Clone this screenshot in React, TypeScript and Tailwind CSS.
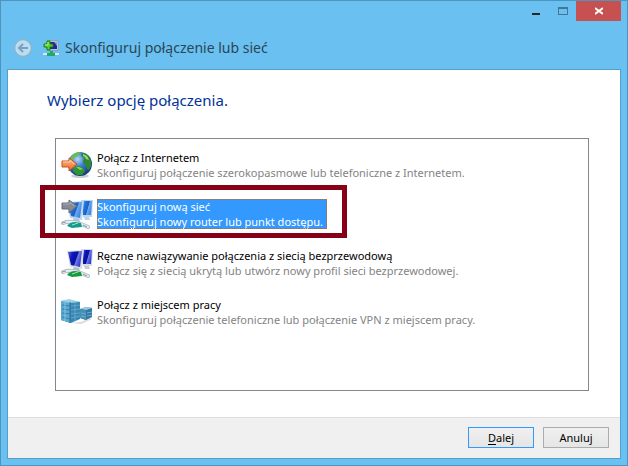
import { useState } from "react";
import clsx from "clsx";

const options = [
  {
    id: "internet",
    title: "Połącz z Internetem",
    description: "Skonfiguruj połączenie szerokopasmowe lub telefoniczne z Internetem.",
    Icon: GlobeIcon,
  },
  {
    id: "new-network",
    title: "Skonfiguruj nową sieć",
    description: "Skonfiguruj nowy router lub punkt dostępu.",
    Icon: NewNetworkIcon,
  },
  {
    id: "wireless",
    title: "Ręczne nawiązywanie połączenia z siecią bezprzewodową",
    description: "Połącz się z siecią ukrytą lub utwórz nowy profil sieci bezprzewodowej.",
    Icon: WirelessIcon,
  },
  {
    id: "workplace",
    title: "Połącz z miejscem pracy",
    description: "Skonfiguruj połączenie telefoniczne lub połączenie VPN z miejscem pracy.",
    Icon: ServersIcon,
  },
];

function GlobeIcon() {
  return (
    <svg className="size-8 shrink-0" viewBox="0 0 32 32" aria-hidden="true">
      <defs>
        <radialGradient id="sea" cx="0.4" cy="0.3" r="0.75">
          <stop offset="0" stopColor="#b5d9fa" />
          <stop offset="0.4" stopColor="#3f7fd6" />
          <stop offset="1" stopColor="#12306f" />
        </radialGradient>
        <linearGradient id="arrow" x1="0" y1="0" x2="0" y2="1">
          <stop offset="0" stopColor="#ffb583" />
          <stop offset="1" stopColor="#ee6a22" />
        </linearGradient>
      </defs>
      <ellipse cx="19" cy="27" rx="9" ry="2" fill="#c9ced6" />
      <circle cx="19" cy="15" r="12" fill="url(#sea)" />
      <path d="M21 4c5 0 8 4 9 8l0 5-2 4-2-1-1-4-3-2 0-3 2-2-3-1-1-2z" fill="#2f8a2f" />
      <path d="M22 5l4 2 2 4-3-1-1-2-2-1z" fill="#a5d86a" />
      <path d="M10 8l4-4 4-1 1 1-2 3-3 1-2 3-3 1z" fill="#6dbd4b" />
      <path d="M13 18l5-1 5 3 1 2-3 4-5 0-4-4z" fill="#2f962b" />
      <path d="M15 18l3 0 4 2-3 1z" fill="#86cf5b" />
      <path d="M1 12h7V9l8 6-8 7v-4H1z" fill="url(#arrow)" stroke="#c45420" strokeLinejoin="round" />
      <path d="M2 13h7v-2l4 4" fill="none" stroke="#ffd0aa" />
    </svg>
  );
}

function Monitors({ muted = false }: { muted?: boolean }) {
  const id = muted ? "screen-muted" : "screen";
  const frame = muted ? "#bdd6ee" : "#d9dde3";
  return (
    <>
      <defs>
        <linearGradient id={id} x1="0" y1="0" x2="1" y2="0.4">
          <stop offset="0" stopColor={muted ? "#65a5ef" : "#5b6be6"} />
          <stop offset="0.35" stopColor={muted ? "#2474d8" : "#0c17bb"} />
          <stop offset="0.65" stopColor={muted ? "#1a5fc4" : "#0a0f9c"} />
          <stop offset="0.72" stopColor={muted ? "#6aa9f0" : "#6f7be8"} />
          <stop offset="1" stopColor={muted ? "#3d88e2" : "#3340cb"} />
        </linearGradient>
      </defs>
      <path d="M20 2l12 0-1 17-9 0z" fill={frame} />
      <path d="M21 3l10 0-1 14-8 0z" fill={`url(#${id})`} />
      <path d="M6 4l17-1-2 19-12-2z" fill={frame} />
      <path d="M7 5l14-1-2 16-9-2z" fill={`url(#${id})`} />
      <path d="M13 20l5 1 1 3-8 0z" fill={muted ? "#a5c6e5" : "#b9bdc4"} />
      <path d="M23 19l5 0 1 3-5 0z" fill={muted ? "#b9d3ea" : "#c8ccd2"} />
    </>
  );
}

function Cable({ color }: { color: string }) {
  return (
    <>
      <path d="M2 25q10-4 25 4" fill="none" stroke="#aebdc6" strokeWidth="4" strokeLinecap="round" />
      <path d="M2 25q10-4 25 4" fill="none" stroke="#e6f0f4" strokeWidth="2" strokeLinecap="round" />
      <path d="M6 28q3-4 8-4l6 1 1 4-10 1z" fill={color} />
      <path d="M11 27l6-2" stroke="#a5dfb5" />
      <path d="M1 25l4-1M22 27l4 2" stroke="#8299a4" />
    </>
  );
}

function NewNetworkIcon() {
  return (
    <svg className="size-8 shrink-0 overflow-visible" viewBox="0 0 32 32" aria-hidden="true">
      <Monitors muted />
      <Cable color="#159a91" />
      <path d="M1 5h7V2l8 6-8 7v-4H1z" fill="#878995" stroke="#656b7c" strokeLinejoin="round" />
      <path d="M2 6h7V4l4 4" fill="none" stroke="#aaacb5" />
    </svg>
  );
}

function WirelessIcon() {
  return (
    <svg className="size-8 shrink-0 overflow-visible" viewBox="0 0 32 32" aria-hidden="true">
      <Monitors />
      <Cable color="#169b3d" />
    </svg>
  );
}

function ServersIcon() {
  return (
    <svg className="size-8 shrink-0" viewBox="0 0 32 32" aria-hidden="true">
      <path d="M10 27l10-1 9-4 2 1-11 5z" fill="#d5dade" />
      <path d="M0 5l9-1 10 2v17l-9 4-10-3z" fill="#3b87b2" />
      <path d="M0 5l9 1v21l-9-3z" fill="#5aa9d2" />
      <path d="M0 5l8-2 11 3-10 1z" fill="#9bd0e8" />
      <path d="M1 9l8 1M1 13l8 1M1 17l8 1M1 21l8 2" stroke="#367fa8" />
      <path d="M4 6v19" stroke="#83c4e3" />
      <path d="M10 10l9-1M10 14l9-1M10 18l9-1M10 22l9-2M14 7v18" stroke="#5ea8cc" />
      <path d="M9 6v21" stroke="#2c7199" />
      <path d="M19 13l6-2 6 1v9l-6 3-6-2z" fill="#34789f" />
      <path d="M19 13l6-2 6 1-6 2z" fill="#9ccde4" />
      <path d="M19 13l6 1v10l-6-2z" fill="#4590b8" />
      <path d="M20 17l5 1M20 20l5 1M26 17l5-1M26 20l5-1" stroke="#6aaccb" />
    </svg>
  );
}

function BackIcon() {
  return (
    <svg className="size-5" viewBox="0 0 20 20" fill="none" aria-hidden="true">
      <circle cx="10" cy="10" r="8.500" fill="#b6def6" stroke="#8eb4c9" strokeWidth="1.500" />
      <path d="M15 10H6M10 6l-4 4 4 4" stroke="#7f9fb2" strokeWidth="2" />
    </svg>
  );
}

function WizardIcon() {
  return (
    <svg className="size-4" viewBox="0 0 16 16" aria-hidden="true">
      <path d="M5 1h10v9H5z" fill="#f0f4f8" stroke="#8796a5" />
      <path d="M7 2h7v7H7z" fill="#23269c" />
      <path d="M11 2h3v4z" fill="#8b95df" />
      <path d="M0 13h16v2H0z" fill="#dfe5e9" />
      <path d="M7 11h3v2h2v3H4v-3h3z" fill="#1fac62" />
      <path d="M4 1h3v3h3v3H7v3H4V7H1V4h3z" fill="#59d22e" stroke="#1c7a16" />
      <path d="M5 2v3H2" fill="none" stroke="#b6f28e" />
    </svg>
  );
}

export default function App() {
  const [selected, setSelected] = useState("new-network");

  return (
    <div className="flex min-h-screen flex-col border border-[#4e95bd] bg-[#69c0f1] px-1.5 pb-1.5 font-['Noto_Sans','Open_Sans',sans-serif] text-[11px] text-black">
      <header className="flex h-17 flex-col">
        <div className="flex h-5 justify-end">
          <button type="button" aria-label="Minimalizuj" className="flex w-7 items-center justify-center">
            <svg className="h-2 w-2" viewBox="0 0 8 8" shapeRendering="crispEdges">
              <path d="M0 6h8v2H0z" fill="#272727" />
            </svg>
          </button>
          <button type="button" aria-label="Maksymalizuj" disabled className="flex w-[26px] items-center justify-center">
            <svg className="h-2 w-2.5" viewBox="0 0 10 8" shapeRendering="crispEdges">
              <path d="M0 0h10v8H0zM1 2v5h8V2z" fill="#457590" fillRule="evenodd" />
            </svg>
          </button>
          <button type="button" aria-label="Zamknij" className="flex w-[45px] items-center justify-center bg-[#c75050]">
            <svg className="h-2 w-2" viewBox="0 0 8 8">
              <path d="M0 1l8 6M8 1l-8 6" stroke="#fff" strokeWidth="2" />
            </svg>
          </button>
        </div>
        <div className="flex flex-1 items-center pt-1.5 pl-1.5">
          <button type="button" aria-label="Wstecz" disabled>
            <BackIcon />
          </button>
          <span className="ml-2.5">
            <WizardIcon />
          </span>
          <h1 className="ml-1.5 text-sm leading-5 text-[#2b4654]">Skonfiguruj połączenie lub sieć</h1>
        </div>
      </header>

      <main className="flex flex-1 flex-col border border-[#559fc8] bg-white">
        <section className="flex flex-1 flex-col pr-[31px] pb-[26px] pl-[47px]">
          <h2 className="-ml-2 pt-[18px] pb-[26px] text-[15px] leading-6 text-[#003399]">Wybierz opcję połączenia.</h2>
          <ul className="flex flex-1 flex-col gap-[17px] border border-[#828790] pt-2.5 pl-[5px]">
            {options.map(({ id, title, description, Icon }) => {
              const active = id === selected;
              return (
                <li key={id} className="relative flex">
                  <button
                    type="button"
                    aria-pressed={active}
                    onClick={() => setSelected(id)}
                    className="flex items-center gap-1 text-left leading-[15px] whitespace-nowrap"
                  >
                    <Icon />
                    <span
                      className={clsx(
                        "block pr-1",
                        active && "bg-[#3399ff] text-white outline-1 -outline-offset-1 outline-dotted outline-[#cc6600]"
                      )}
                    >
                      <span className="block">{title}</span>
                      <span className={clsx("block", !active && "text-[#838383]")}>{description}</span>
                    </span>
                  </button>
                  {id === "new-network" && (
                    <span className="pointer-events-none absolute -top-[13px] -left-[21px] h-[53px] w-[307px] border-5 border-[#880015]" />
                  )}
                </li>
              );
            })}
          </ul>
        </section>

        <footer className="flex justify-end gap-[9px] border-t border-[#dfdfdf] bg-[#f0f0f0] pt-[9px] pr-[11px] pb-2.5">
          <button
            type="button"
            className="h-[21px] w-[66px] border border-[#3399ff] bg-linear-to-b from-[#f0f0f0] to-[#e5e5e5] leading-[19px]"
          >
            <span className="underline underline-offset-2">D</span>alej
          </button>
          <button
            type="button"
            className="h-[21px] w-[66px] border border-[#acacac] bg-linear-to-b from-[#f0f0f0] to-[#e5e5e5] leading-[19px]"
          >
            Anuluj
          </button>
        </footer>
      </main>
    </div>
  );
}
